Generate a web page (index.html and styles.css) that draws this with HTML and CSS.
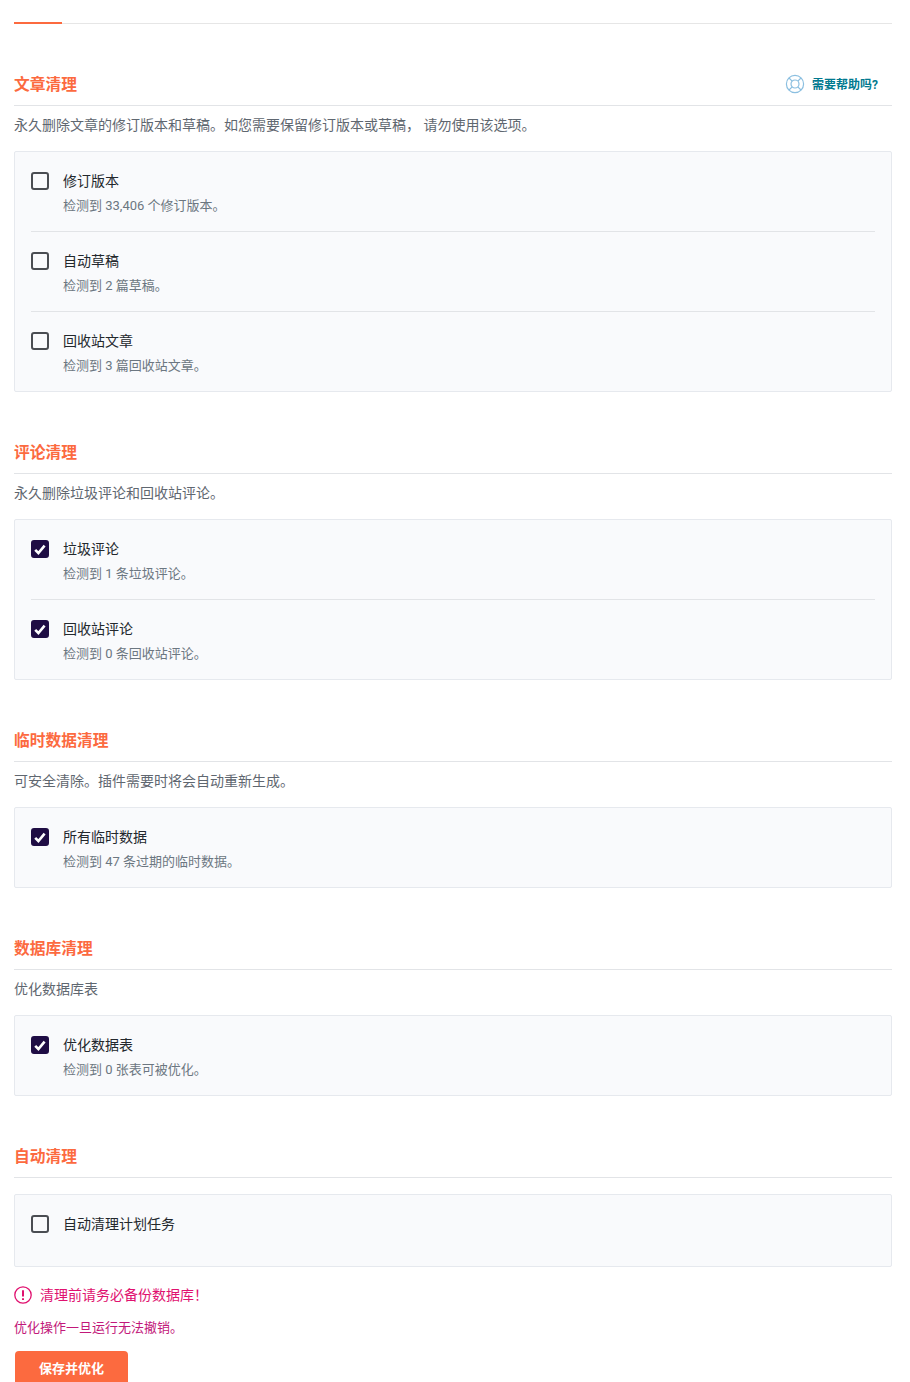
FILE: index.html
```html
<!DOCTYPE html>
<html lang="zh-CN">
<head>
  <meta charset="UTF-8" />
  <meta name="viewport" content="width=device-width, initial-scale=1.0"/>
  <title>优化</title>
  <link rel="stylesheet" href="styles.css">
</head>
<body>
  <div class="tabs"><span class="tab-active"></span></div>

  <section class="section first">
    <div class="section-head">
      <h2>文章清理</h2>
      <a class="help" href="#">
        <svg width="20" height="20" viewBox="0 0 20 20" fill="none" stroke="#8bbfe0" stroke-width="1.2">
          <circle cx="10" cy="10" r="8.6"/>
          <circle cx="10" cy="10" r="4"/>
          <path d="M4 4l3.2 3.2M16 4l-3.2 3.2M4 16l3.2-3.2M16 16l-3.2-3.2"/>
        </svg>
        需要帮助吗?
      </a>
    </div>
    <p class="desc">永久删除文章的修订版本和草稿。如您需要保留修订版本或草稿， 请勿使用该选项。</p>
    <div class="box">
      <div class="row">
        <span class="check"></span>
        <div><div class="label">修订版本</div><div class="note">检测到 33,406 个修订版本。</div></div>
      </div>
      <div class="row">
        <span class="check"></span>
        <div><div class="label">自动草稿</div><div class="note">检测到 2 篇草稿。</div></div>
      </div>
      <div class="row">
        <span class="check"></span>
        <div><div class="label">回收站文章</div><div class="note">检测到 3 篇回收站文章。</div></div>
      </div>
    </div>
  </section>

  <section class="section">
    <div class="section-head"><h2>评论清理</h2></div>
    <p class="desc">永久删除垃圾评论和回收站评论。</p>
    <div class="box">
      <div class="row">
        <span class="check on"><svg width="12" height="11" viewBox="0 0 12 11" fill="none" stroke="#fff" stroke-width="2.6"><path d="M1.2 5.8l3.2 3.2 6.2-7.4"/></svg></span>
        <div><div class="label">垃圾评论</div><div class="note">检测到 1 条垃圾评论。</div></div>
      </div>
      <div class="row">
        <span class="check on"><svg width="12" height="11" viewBox="0 0 12 11" fill="none" stroke="#fff" stroke-width="2.6"><path d="M1.2 5.8l3.2 3.2 6.2-7.4"/></svg></span>
        <div><div class="label">回收站评论</div><div class="note">检测到 0 条回收站评论。</div></div>
      </div>
    </div>
  </section>

  <section class="section">
    <div class="section-head"><h2>临时数据清理</h2></div>
    <p class="desc">可安全清除。插件需要时将会自动重新生成。</p>
    <div class="box">
      <div class="row">
        <span class="check on"><svg width="12" height="11" viewBox="0 0 12 11" fill="none" stroke="#fff" stroke-width="2.6"><path d="M1.2 5.8l3.2 3.2 6.2-7.4"/></svg></span>
        <div><div class="label">所有临时数据</div><div class="note">检测到 47 条过期的临时数据。</div></div>
      </div>
    </div>
  </section>

  <section class="section">
    <div class="section-head"><h2>数据库清理</h2></div>
    <p class="desc">优化数据库表</p>
    <div class="box">
      <div class="row">
        <span class="check on"><svg width="12" height="11" viewBox="0 0 12 11" fill="none" stroke="#fff" stroke-width="2.6"><path d="M1.2 5.8l3.2 3.2 6.2-7.4"/></svg></span>
        <div><div class="label">优化数据表</div><div class="note">检测到 0 张表可被优化。</div></div>
      </div>
    </div>
  </section>

  <section class="section">
    <div class="section-head"><h2>自动清理</h2></div>
    <div class="box box-auto">
      <div class="row">
        <span class="check"></span>
        <div><div class="label">自动清理计划任务</div></div>
      </div>
    </div>
  </section>

  <p class="warn">
    <svg width="18" height="18" viewBox="0 0 18 18" fill="none" stroke="#e0116f" stroke-width="1.3">
      <circle cx="9" cy="9" r="8.2"/>
      <path d="M9 4.2v6.2M9 12.2v1.8" stroke-width="2"/>
    </svg>
    清理前请务必备份数据库！
  </p>
  <p class="warn-line">优化操作一旦运行无法撤销。</p>
  <button class="save" type="button">保存并优化</button>
</body>
</html>
```

FILE: styles.css
```css
* {
  box-sizing: border-box;
  margin: 0;
  padding: 0;
}

html, body {
  height: 1382px;
  overflow: hidden;
}

body {
  background: #fff;
  padding: 22px 18px 0 14px;
  color: #5f6770;
  font-family: Roboto, "Noto Sans CJK SC", sans-serif;
  font-size: 14px;
}

.tabs {
  height: 2px;
  border-bottom: 1px solid #e6e6e6;
}

.tab-active {
  display: block;
  width: 48px;
  height: 2px;
  background: #fc6a3f;
}

.section {
  margin-top: 40px;
}

.section.first {
  margin-top: 0;
  padding-top: 40px;
}

.section-head {
  display: flex;
  justify-content: space-between;
  align-items: center;
  height: 42px;
  padding-bottom: 3px;
  border-bottom: 1px solid #e2e4e7;
}

.section-head h2 {
  font-size: 15.75px;
  font-weight: 700;
  color: #fc6a3f;
}

.help {
  display: flex;
  align-items: center;
  gap: 7px;
  margin: 1px 14px 0 0;
  font-size: 12px;
  font-weight: 700;
  color: #00798f;
  text-decoration: none;
}

.desc {
  height: 45px;
  padding-top: 9px;
  line-height: 20px;
}

.box {
  background: #f9fafc;
  border: 1px solid #e6e9ee;
  border-radius: 2px;
  padding: 0 16px;
}

.box-auto {
  height: 73px;
  margin-top: 16px;
}

.row {
  display: flex;
  gap: 14px;
  height: 80px;
  padding-top: 20px;
  border-bottom: 1px solid #e2e4e7;
}

.row:last-child {
  height: 79px;
  border-bottom: 0;
}

.check {
  display: flex;
  align-items: center;
  justify-content: center;
  flex: none;
  width: 18px;
  height: 18px;
  border: 2px solid #4a4d52;
  border-radius: 3px;
}

.check.on {
  background: #1f0d44;
  border-color: #1f0d44;
}

.label {
  color: #23282d;
  line-height: 18px;
}

.note {
  margin-top: 6px;
  padding-top: 1px;
  font-size: 13px;
  line-height: 17px;
  color: #6c7781;
}

.warn {
  display: flex;
  align-items: center;
  gap: 8px;
  margin-top: 19px;
  line-height: 18px;
  color: #e0116f;
}

.warn-line {
  margin-top: 15px;
  font-size: 13px;
  line-height: 18px;
  color: #c2187a;
}

.save {
  display: block;
  width: 113px;
  height: 36px;
  margin: 14px 0 0 1px;
  padding-bottom: 4px;
  border: none;
  border-radius: 4px;
  background: #fc6a3f;
  color: #fff;
  font-family: inherit;
  font-size: 13px;
  font-weight: 700;
}
```
